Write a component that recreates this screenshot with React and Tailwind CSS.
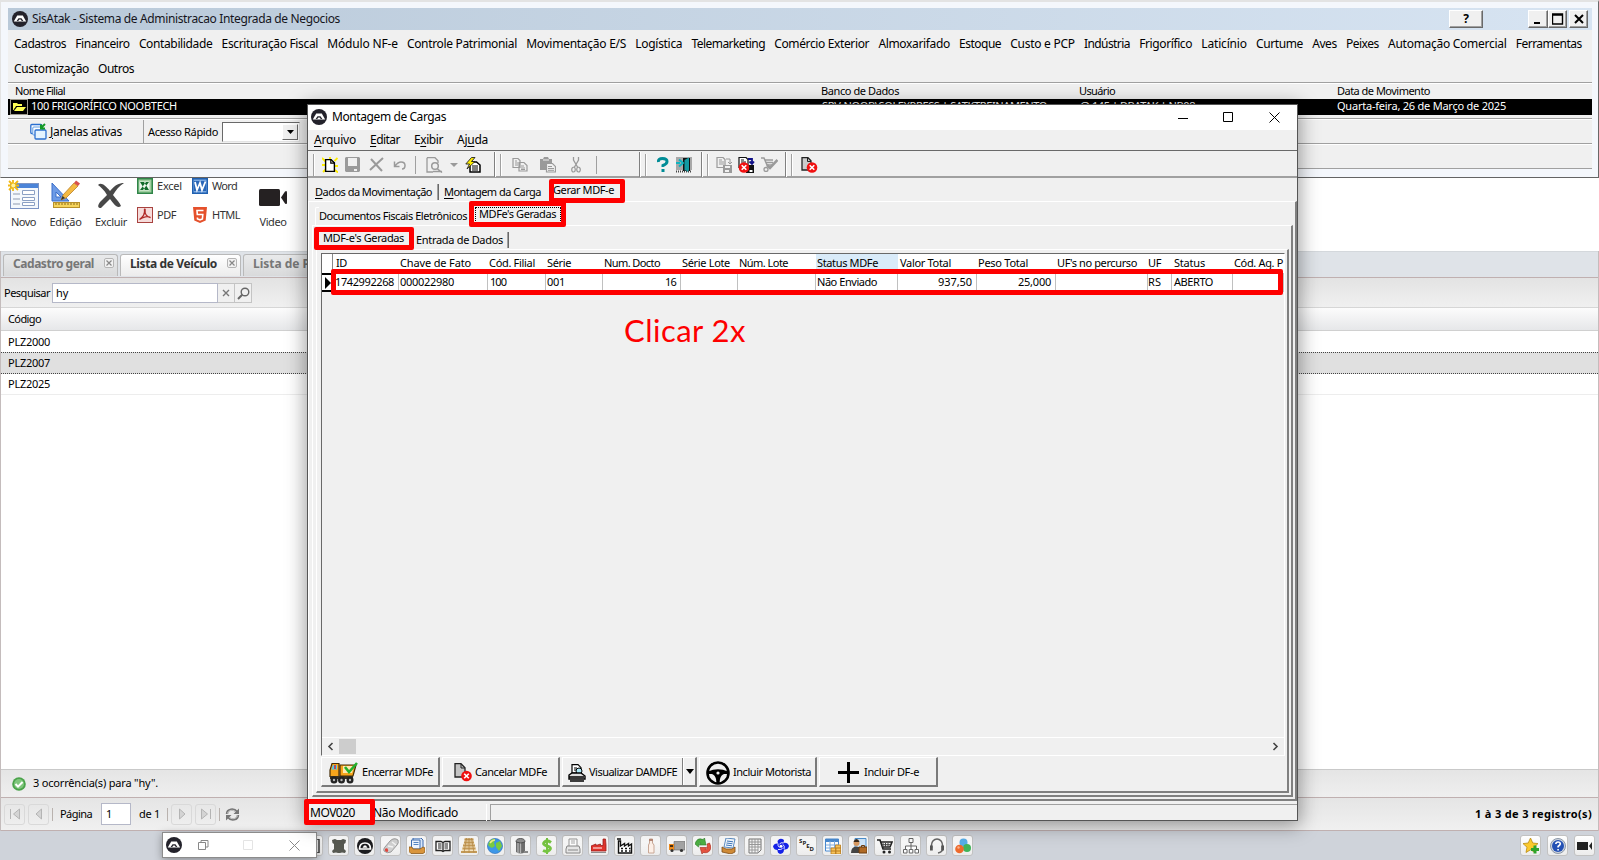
import React, { useLayoutEffect, useRef } from "react";

/* Text run whose tracking is adjusted so that it fills exactly `w` pixels. */
function Fit({ w, className = "", children }) {
  const inner = useRef(null);
  useLayoutEffect(() => {
    const el = inner.current;
    el.style.letterSpacing = "0px";
    const natural = el.getBoundingClientRect().width;
    const n = Math.max(1, el.textContent.length);
    el.style.letterSpacing = (w - natural) / n + "px";
  }, [w]);
  return (
    <span className={"block flex-none whitespace-nowrap " + className} style={{ width: w }}>
      <span ref={inner}>{children}</span>
    </span>
  );
}

const U = ({ children }) => <span className="underline underline-offset-2">{children}</span>;

function Svg({ w = 16, h = 16, vb, className = "", children }) {
  return (
    <svg width={w} height={h} viewBox={vb || `0 0 ${w} ${h}`} className={"block flex-none " + className} fill="none">
      {children}
    </svg>
  );
}

function Logo({ className = "" }) {
  return (
    <Svg className={className}>
      <circle cx="8" cy="8" r="8" fill="#23222b" />
      <path d="M1.800 10.500 L5.200 4.500 H10.800 L14.200 10.500 Z" fill="#fff" />
      <path d="M4.600 10 L6.500 7.200 H9.500 L11.400 10 Z" fill="#23222b" />
      <path d="M6.200 10 L7.400 8.600 H8.600 L9.800 10 Z" fill="#fff" />
    </Svg>
  );
}

/* ---------- main window header ---------- */

const MENU = [
  ["Cadastros", 52], ["Financeiro", 54.5], ["Contabilidade", 73.5], ["Escrituração Fiscal", 96.5], ["Módulo NF-e", 70.5],
  ["Controle Patrimonial", 110], ["Movimentação E/S", 100], ["Logística", 47], ["Telemarketing", 73.5],
  ["Comércio Exterior", 95], ["Almoxarifado", 71.5], ["Estoque", 42], ["Custo e PCP", 64.5], ["Indústria", 46],
  ["Frigorífico", 53], ["Laticínio", 45.5], ["Curtume", 47], ["Aves", 24.5], ["Peixes", 33], ["Automação Comercial", 118.5],
  ["Ferramentas", 66],
];

function ClassicButton({ className, children }) {
  return (
    <div className={"flex h-[18px] flex-none items-center justify-center border border-b-[#696969] border-l-white border-r-[#696969] border-t-white bg-[#f0f0f0] shadow-[inset_-1px_-1px_0_#a0a0a0] " + className}>
      {children}
    </div>
  );
}

function MainHeader() {
  return (
    <header className="h-[178px] border-b border-l border-r border-t-2 border-b-[#646464] border-l-[#e3e3e3] border-r-[#696969] border-t-[#e3e3e3] bg-[#f4f7fc] pl-[7px] pr-[6px] pt-[6px] text-black">
      <div className="flex h-[22px] items-center bg-gradient-to-r from-[#b9c9d9] to-[#d7e4f2] pl-[4px] pr-[4px]">
        <Logo />
        <Fit w={308} className="ml-1 text-[12px] text-[#15151c]">SisAtak - Sistema de Administracao Integrada de Negocios</Fit>
        <ClassicButton className="ml-auto w-[34px] text-[12px] font-bold">?</ClassicButton>
        <ClassicButton className="ml-[45px] w-[20px]"><Svg w={12} h={12}><path d="M2 10h6" stroke="#000" strokeWidth="2" /></Svg></ClassicButton>
        <ClassicButton className="w-[19px]"><Svg w={12} h={12}><path d="M.5 1h10v10H.5z M.5 2h10" stroke="#000" strokeWidth="1.4" /></Svg></ClassicButton>
        <ClassicButton className="ml-[2px] w-[19px]"><Svg w={12} h={12}><path d="M2 2l8 8M10 2l-8 8" stroke="#000" strokeWidth="2" /></Svg></ClassicButton>
      </div>
      <nav className="h-[53px] border-b border-[#a0a0a0] bg-[#f0f0f0] pl-[6px] pt-px text-[12px]">
        <div className="flex h-[25px] items-center gap-[9.2px]">
          {MENU.map(([t, w]) => <Fit key={t} w={w}>{t}</Fit>)}
        </div>
        <div className="flex h-[25px] items-center gap-[9px]">
          <Fit w={75}>Customização</Fit>
          <Fit w={36}>Outros</Fit>
        </div>
      </nav>
      <div className="flex h-[16px] items-center border-t border-white bg-[#f0f0f0] pl-[7px] text-[11px]">
        <Fit w={50}>Nome Filial</Fit>
        <Fit w={78} className="ml-[756px]">Banco de Dados</Fit>
        <Fit w={36} className="ml-[180px]">Usuário</Fit>
        <Fit w={93} className="ml-[222px]">Data de Movimento</Fit>
      </div>
      <div className="flex h-[16px] items-center bg-black pl-[2px] text-[11px] text-white">
        <div className="flex h-[16px] w-[18px] items-center justify-center border border-[#a09c90]">
          <Svg w={14} h={11}>
            <path d="M1 8V1h4l1 1h4v2H4L2 8z" fill="#ffff54" /><path d="M2 9l3-4h9l-3 4z" fill="#ffff54" /><path d="M3.500 5.500L2 8" stroke="#222" />
          </Svg>
        </div>
        <Fit w={146} className="ml-[3px] mt-[-2px]">100 FRIGORÍFICO NOOBTECH</Fit>
        <Fit w={225} className="ml-[645px] mt-[-2px]">{"SRV-NOOB\\SQLEXPRESS | SATKTREINAMENTO"}</Fit>
        <Fit w={115} className="ml-[33px] mt-[-2px]">@ 145 | DBATAK | NB08</Fit>
        <Fit w={169} className="ml-[142px] mt-[-2px]">Quarta-feira, 26 de Março de 2025</Fit>
      </div>
      <div className="h-[4px] border-b border-[#a0a0a0] bg-[#f0f0f0]" />
      <div className="flex h-[25px] items-center border-b border-[#a0a0a0] border-t border-t-white bg-[#f0f0f0]">
        <div className="flex h-full w-[136px] items-center border-r border-[#a0a0a0] pl-[22px]">
          <Svg w={17} h={17}>
            <rect x=".8" y="1.500" width="11" height="9" rx="1" fill="#fff" stroke="#2a6fd0" strokeWidth="1.3" />
            <rect x="2.800" y="4" width="10" height="8" rx="1" fill="#fff" stroke="#5b9ae4" />
            <rect x="5" y="7" width="11" height="9" rx="1" fill="#e4f3ff" stroke="#2a6fd0" strokeWidth="1.3" />
            <path d="M15 1l-4 4M11 1.500v4h4" stroke="#159a25" strokeWidth="2" />
          </Svg>
          <Fit w={72} className="ml-[3px] text-[12px]"><U>J</U>anelas ativas</Fit>
        </div>
        <Fit w={70} className="ml-[4px] mt-px text-[11px]">Acesso Rápido</Fit>
        <div className="ml-[4px] flex h-[20px] w-[78px] justify-end border border-b-[#e3e3e3] border-l-[#696969] border-r-[#e3e3e3] border-t-[#696969] bg-white p-px">
          <div className="flex w-[16px] items-center justify-center border border-b-[#696969] border-l-white border-r-[#696969] border-t-white bg-[#f0f0f0]">
            <Svg w={7} h={4}><path d="M0 0h7L3.500 4z" fill="#000" /></Svg>
          </div>
        </div>
      </div>
      <div className="h-[25px] border-b border-t border-b-[#a0a0a0] border-t-white bg-[#f0f0f0]" />
    </header>
  );
}

/* ---------- page toolbar ---------- */

function BigTool({ icon, w, cell, label }) {
  return (
    <div className="flex flex-none flex-col items-center" style={{ width: cell }}>
      <div className="flex h-[34px] items-center">{icon}</div>
      <Fit w={w} className="mt-[3px] text-[11px] leading-[14px]">{label}</Fit>
    </div>
  );
}

function PageToolbar() {
  return (
    <div className="flex h-[73px] bg-white pl-[5px] text-[#333]">
      <div className="flex w-[127px]">
        <BigTool cell={37} w={25} label="Novo" icon={
          <Svg w={31} h={30}>
            <rect x="2.500" y="3.500" width="28" height="25" fill="#f4f8fc" stroke="#7c94c4" />
            <rect x="3" y="4" width="27" height="4" fill="#4b84d8" />
            <path d="M5 14h7M5 19h7M5 24h7" stroke="#8f9bb0" />
            <path d="M14.500 10.500h12v4h-12zM14.500 17.500h12v3h-12zM14.500 22.500h12v3h-12z" stroke="#8ba0c4" fill="#fff" />
            <path d="M5 0v11M0 5.500h11M1 1l9 9M10 1L1 10" stroke="#f3b913" strokeWidth="1.800" /><circle cx="5.300" cy="5.500" r="2" fill="#fff3a0" />
          </Svg>} />
        <BigTool cell={47} w={32} label="Edição" icon={
          <Svg w={31} h={30}>
            <path d="M2 3v18h17z M6 12v5h5z" fill="#6d9be6" stroke="#3b6fca" fillRule="evenodd" />
            <path d="M11 20l2-5L24 3l4 3-12 12z" fill="#f4b941" stroke="#b98028" strokeWidth=".8" />
            <path d="M24 3l2-2.500 4 3L28 6z" fill="#d8504c" /><path d="M11 20l1.600-4 2.400 2z" fill="#333" />
            <rect x="3.500" y="22.500" width="26" height="5" fill="#f6d45c" stroke="#b8902a" />
            <path d="M6 23v2M9 23v2M12 23v2M15 23v2M18 23v2M21 23v2M24 23v2M27 23v2" stroke="#8a6a1a" />
          </Svg>} />
        <BigTool cell={44} w={32} label="Excluir" icon={
          <Svg w={28} h={28}>
            <path d="M1 4C4 1 8 4 13 10 18 4 22 2 27 2 22 5 19 9 16 14 20 19 23 22 24 25 20 28 17 23 13 18 10 21 7 24 4 27 1 27 0 25 3 21L10 14C7 9 4 6 1 4z" fill="#484848" />
          </Svg>} />
      </div>
      <div className="grid h-[58px] grid-cols-[55px_66px] grid-rows-[29px_29px] pl-[5px] text-[11px] leading-[14px]">
        <div className="flex items-start gap-1">
          <Svg><rect width="16" height="16" fill="#2f8548" /><path d="M1.500 1.500h13v13h-13z" fill="#9fce9f" /><path d="M2.500 3.500h10v9h-10z" fill="#eef8ee" /><path d="M3 4h4l5 8H8zM12 4H9l-6 8h3z" fill="#126c2b" /></Svg>
          <Fit w={25} className="mt-[1px]">Excel</Fit>
        </div>
        <div className="flex items-start gap-1">
          <Svg><rect width="16" height="16" fill="#2060b0" /><path d="M1.500 1.500h13v13h-13z" fill="#79a8e2" /><path d="M2 3h12v10H2z" fill="#2a67b8" /><path d="M3 4l2 8L8 5l2 7L13.500 3.500" stroke="#fff" strokeWidth="1.800" /></Svg>
          <Fit w={25} className="mt-[1px]">Word</Fit>
        </div>
        <div className="flex items-start gap-1">
          <Svg><rect x=".5" y=".5" width="15" height="15" fill="#f6dcdb" stroke="#a8423f" /><path d="M2.500 12.500C6 10 8 6 7.500 3c-.3-1.500 1-1 .6.500C7.500 7 10 10 13.500 10.500 11 9 6 9.500 2.500 12.500z" stroke="#b02a28" strokeWidth="1.300" /></Svg>
          <Fit w={19} className="mt-[1px]">PDF</Fit>
        </div>
        <div className="flex items-start gap-1">
          <Svg><path d="M1 0h14l-1.300 13.500L8 16l-5.700-2.500z" fill="#e5502b" /><path d="M11.500 3.500H5l.3 4h5.500l-.4 4.500-2.400.8-2.500-.8-.1-1.500" stroke="#fff" strokeWidth="1.600" /></Svg>
          <Fit w={28} className="mt-[1px]">HTML</Fit>
        </div>
      </div>
      <div className="ml-[-1px]">
        <BigTool cell={32} w={27} label="Video" icon={
          <Svg w={28} h={17} className="mt-[4px]"><rect width="21" height="17" rx="1.500" fill="#252122" /><path d="M22 8.500l4-6q2-1.500 2 1v10q0 2.500-2 1z" fill="#252122" /></Svg>} />
      </div>
    </div>
  );
}

/* ---------- list area ---------- */

function PageTab({ label, w, width, active }) {
  return (
    <div className={"flex h-[22px] flex-none items-center rounded-t-[3px] border border-b-0 border-[#b9b9b9] pb-[3px] pl-[9px] text-[12px] font-bold " + (active ? "bg-gradient-to-b from-white to-[#ececec] text-[#333]" : "bg-gradient-to-b from-[#e9eaeb] to-[#d9dadb] text-[#777]")} style={{ width }}>
      <Fit w={w}>{label}</Fit>
      <div className="mb-[3px] ml-auto mr-[3px] flex h-[10px] w-[10px] items-center justify-center rounded-[2px] border border-[#b5b5b5] bg-[#f2f2f2]">
        <Svg w={6} h={6}><path d="M.5.5l5 5M5.500.5l-5 5" stroke="#888" strokeWidth="1.200" /></Svg>
      </div>
    </div>
  );
}

function PagerButton({ d }) {
  return (
    <div className="flex h-[21px] w-[21px] flex-none items-center justify-center rounded-[3px] border border-[#d9d9d9]">
      <Svg w={12} h={12}><path d={d} fill="#d4d4d4" stroke="#b4b4b4" /></Svg>
    </div>
  );
}

const Sep = ({ className }) => <div className={"h-[13px] w-px flex-none bg-[#b9b2ae] " + className} />;

function ListArea() {
  return (
    <main className="flex h-[580px] flex-col border-l border-r border-[#c4bcbc] text-[11px] text-black">
      <div className="flex h-[27px] items-start gap-[2px] border-b border-t border-b-[#c0b0b0] border-t-[#d4d8dc] bg-[#dfe3e8] pl-[2px] pt-[2px]">
        <PageTab label="Cadastro geral" w={81} width={115} />
        <PageTab label="Lista de Veículo" w={87} width={121} active />
        <PageTab label="Lista de P" w={57} width={130} />
      </div>
      <div className="flex h-[29px] items-center bg-gradient-to-b from-[#e3e3e3] to-[#f0f0f0] pl-[3px]">
        <Fit w={46} className="mt-px">Pesquisar</Fit>
        <div className="ml-[2px] mt-px flex h-[20px] w-[166px] items-center border border-[#b5b8c8] bg-white pl-[3px] text-[11px]">hy</div>
        <div className="mt-px flex h-[20px] w-[17px] items-center justify-center border border-l-0 border-[#c4c4c4] bg-[#f0f0f0]">
          <Svg w={8} h={8}><path d="M1 1l6 6M7 1L1 7" stroke="#777" strokeWidth="1.400" /></Svg>
        </div>
        <div className="mt-px flex h-[20px] w-[17px] items-center justify-center border border-l-0 border-[#c4c4c4] bg-[#f0f0f0]">
          <Svg w={13} h={13}><circle cx="8" cy="5" r="3.800" stroke="#666" strokeWidth="1.400" /><path d="M5.200 7.800L1 12" stroke="#666" strokeWidth="2" /></Svg>
        </div>
      </div>
      <div className="flex h-[24px] items-center border-b border-t border-b-[#d0d0d0] border-t-[#d6d6d6] bg-gradient-to-b from-[#fcfcfc] to-[#e6e7e9] pl-[7px]"><Fit w={33}>Código</Fit></div>
      <div className="flex h-[21px] items-center pl-[7px] pt-px"><Fit w={42}>PLZ2000</Fit></div>
      <div className="flex h-[22px] items-center border-b border-t border-dotted border-[#444] bg-[#e0e0e0] pl-[7px]"><Fit w={42}>PLZ2007</Fit></div>
      <div className="flex h-[21px] items-center border-b border-[#ededed] pl-[7px]"><Fit w={42}>PLZ2025</Fit></div>
      <div className="flex-1" />
      <div className="flex h-[28px] items-center border-t border-[#c9c9c9] bg-gradient-to-b from-[#e5e5e5] to-[#efefef] pl-[11px]">
        <Svg w={14} h={14}><circle cx="7" cy="7" r="6.800" fill="#4aa34a" /><circle cx="7" cy="7" r="5" fill="#7fc67c" /><path d="M3.500 7l2.500 2.600L10.600 5" stroke="#fff" strokeWidth="2" /></Svg>
        <Fit w={125} className="ml-[7px]">3 ocorrência(s) para "hy".</Fit>
      </div>
      <div className="flex h-[34px] items-center border-b border-t border-[#c0b0b0] bg-gradient-to-b from-[#e5e5e5] to-[#f0f0f0] pl-[3px] pr-[6px]">
        <PagerButton d="M1.500 1v10M10.500 1v10L4.500 6z" />
        <div className="w-[3px]" />
        <PagerButton d="M8.500 1v10L3 6z" />
        <Sep className="ml-[3px]" />
        <Fit w={32} className="ml-[7px]">Página</Fit>
        <div className="ml-[9px] flex h-[22px] w-[30px] items-center border border-[#b5b8c8] bg-white pl-[4px]">1</div>
        <Fit w={21} className="ml-[8px]">de 1</Fit>
        <Sep className="ml-[7px]" />
        <div className="w-[3px]" />
        <PagerButton d="M3.500 1v10L9 6z" />
        <div className="w-[3px]" />
        <PagerButton d="M10.500 1v10M1.500 1v10l6-5z" />
        <Sep className="ml-[3px]" />
        <Svg w={15} h={15} className="ml-[5px]">
          <path d="M2 7C2 2 9 1 12 5M13 8C13 13 6 14 3 10" stroke="#777" strokeWidth="2.400" /><path d="M2.600 6.500C3 3 9 2 11.500 5.500M12.400 8.500C12 12 6 13 3.500 9.500" stroke="#ddd" strokeWidth=".8" />
          <path d="M14 1.500v5.500H8.500zM1 13.500V8h5.500z" fill="#777" />
        </Svg>
        <Fit w={117} className="ml-auto font-bold">1 à 3 de 3 registro(s)</Fit>
      </div>
    </main>
  );
}

/* ---------- bottom icon bar ---------- */

const SHORTCUTS = [
  <path key="a" d="M1 2l3-1 2 1h4l2-1 3 1-.5 3-1.500 1v5l2 2-1 2-3-.5-2 .5H7L5 14.500 2 15l-1-2 2-2V6L1.500 5z" fill="#565850" />,
  <g key="b"><circle cx="8" cy="8" r="8" fill="#1c1c1f" /><path d="M2.500 11q0-6 5.500-6t5.500 6z" fill="none" stroke="#fff" strokeWidth="1.700" /><path d="M5.500 9.800L7 7.500h2l1.500 2.300z" fill="#fff" /></g>,
  <g key="c"><path d="M7 3q4-4 8-1 1 3-1 5l-6 7q-4 2-7-1-1-2 1-4z" fill="#d0d0d0" stroke="#8a8a8a" strokeWidth=".8" /><path d="M9 4l4 3M5 8l5 1" stroke="#f4f4f4" strokeWidth="1.500" /><path d="M2 11q1-1 2.500-.5 1.500 2 0 3.500-3 0-2.500-3z" fill="#e0453c" /></g>,
  <g key="d"><path d="M4 0h8l2 2v9H4z" fill="#dbe9fb" stroke="#3e6fb4" /><path d="M2.500 2H11v9H2.500z" fill="#eef5ff" stroke="#3e6fb4" /><path d="M4.500 4.500h5M4.500 6.500h5" stroke="#5486c4" /><path d="M0 9h3l1 2h7l3-2 2 1v4l-2 1.500H2l-2-2z" fill="#d9953c" stroke="#8d5a1c" strokeWidth=".8" /></g>,
  <g key="e"><path d="M1 3.500h5l2 1 2-1h5v9h-5l-2 1-2-1H1zM8 4.500v9" stroke="#222" strokeWidth="1.300" fill="#fff" /><path d="M3 6h3.500M3 8h3.500M3 10h3.500M9.500 6H13M9.500 8H13M9.500 10H13" stroke="#222" strokeWidth="1.200" /></g>,
  <g key="f"><path d="M4 0h8l4 15H0z" fill="#f4e3bf" /><path d="M3.500 1.500h9M3 4.500h10M2 7.500h12M1.500 10.500h13M0 14h16" stroke="#c39a58" strokeWidth="2" /><path d="M5.500 0L3 15M8 0v15M10.500 0L13 15" stroke="#b98c48" strokeWidth=".8" /></g>,
  <g key="g"><circle cx="8" cy="8" r="7.600" fill="#3d97e8" stroke="#2c6cb4" strokeWidth=".6" /><path d="M2 4q3-4 6-3L7 5l1 3-3 2-2-1-2-2zM9 5l4-2 2 5-3 5-3-4z" fill="#7acc42" /><path d="M3 5q2-3 5-3" stroke="#f4f08a" strokeWidth="1.500" /></g>,
  <g key="h"><path d="M3 4v10q5 3 9 0V4z" fill="#6c6c6c" /><path d="M5 5v10M7.500 5v10" stroke="#b5b5b5" strokeWidth="1.300" /><path d="M3 4q0-3.500 4.500-3.500T12 4q-4 2-9 0z" fill="#909090" stroke="#444" strokeWidth=".8" /><path d="M11 13h4v2h-4z" fill="#888" /></g>,
  <g key="i"><path d="M12 4.500Q8 1.500 5.500 4t2.500 4 2.500 4-6.500.5" stroke="#76c442" strokeWidth="3" fill="none" /><path d="M8 0v16" stroke="#76c442" strokeWidth="2" /></g>,
  <g key="j"><path d="M4 1h8v8H4z" fill="#fff" stroke="#999" /><path d="M6 3h4M6 5h4" stroke="#aaa" /><path d="M2 8h12l1 3v4H1v-4z" fill="#e6e6e6" stroke="#888" /><path d="M3 12h10" stroke="#888" /></g>,
  <g key="k"><path d="M0 8l5-2v1.500L9.500 6v1.500H12V1h2.500l.5 6v6H0z" fill="#e0352c" stroke="#a0201c" strokeWidth=".8" /><path d="M2 10h9" stroke="#f7b8b4" strokeWidth="1.500" /><path d="M0 14.500h15" stroke="#8e8e8e" /></g>,
  <g key="l"><path d="M1.500 15V3h2v5l4-2.500V8l4-2.500V8l3-2v9z" fill="#fff" stroke="#111" strokeWidth="1.400" /><path d="M4 10.500h2M8 10.500h2M12 10.500h1.500M4 13h2M8 13h2M12 13h1.500M0 1h4" stroke="#111" strokeWidth="1.400" /></g>,
  <g key="m"><path d="M6.500 1h3v4l1.500 2v8H5.500V7l1-2z" fill="#fdf0e8" stroke="#c9a896" /><path d="M6 1h4v2H6z" fill="#b98a78" /></g>,
  <g key="n"><path d="M5 3.500h11v8.500H5z" fill="#a4a4a4" stroke="#666" strokeWidth=".6" /><path d="M0 6h5v6H0z" fill="#ee8a1d" /><path d="M1 7h3v2H1z" fill="#473015" /><circle cx="3" cy="12.500" r="1.600" fill="#333" /><circle cx="12.500" cy="12.500" r="1.600" fill="#333" /></g>,
  <g key="o"><path d="M0 6Q2-1 8 1.500L9.500 0 11 7H4.500L6 5Q4 4.500 3.500 9z" fill="#4db043" stroke="#2c7a28" strokeWidth=".6" /><path d="M16 9q-1 7-8 5.500L7 16 5 9.500h6.500L10 11.500q3 0 2-5.500l2.500-1z" fill="#e4523f" stroke="#a32a1c" strokeWidth=".6" /></g>,
  <g key="p"><path d="M5 0l9 1-2 9-9-1z" fill="#f5faff" stroke="#5c8dc4" /><path d="M6 3l6 .8M5.500 5l6 .8M5 7l6 .8" stroke="#3e76bb" /><path d="M1 9l4 2h6l3-2v5l-4 2-9-2z" fill="#cf8a36" stroke="#7d4d18" strokeWidth=".8" /></g>,
  <g key="q"><path d="M2 1h12v11l-3 3H2z" fill="#f6f6f6" stroke="#777" /><path d="M2 4h12M2 6.500h12M2 9h12M2 12h9M5 1v14M8 1v14M11 1v14" stroke="#999" /></g>,
  <g key="r"><path d="M4.500 3Q7-1 11 2l-.5 3q4-1 5.500 3-1 4-5 3.500 0 4-4 4.500-3-1-2.500-4Q1 12 0 8.500 1 5 5 5.500z" fill="#1622e8" /><path d="M10.500 5Q8 4 6.500 6M11 11q1-3-1-4.500M5 11.500q3 .5 4.500-1M5 5.500Q4.500 8 6.500 9.500" stroke="#fff" strokeWidth=".9" /><circle cx="8" cy="8.200" r="1.500" fill="#fff" /></g>,
  null,
  <g key="t"><path d="M.5 1h13v12H.5z" fill="#fff" stroke="#4a8ad0" /><path d="M.5 2.500h13" stroke="#4a8ad0" strokeWidth="3" /><path d="M1 7h13M1 10h13M5 3v9M9.500 3v9" stroke="#7eace0" /><path d="M6 10h5v6H6zM10.500 7h5v9h-5z" fill="#f7c35c" stroke="#b97c1c" strokeWidth=".8" /><path d="M6 13h10M11 10h5" stroke="#b97c1c" /></g>,
  <g key="u"><path d="M4 .5h11v9H4z" fill="#cfe6fa" stroke="#4c91d0" /><circle cx="5.500" cy="5" r="3" fill="#d99a62" /><path d="M2.500 4q1-3 3-3t3 3z" fill="#3c2a1a" /><path d="M0 15q0-6.500 5.500-6.500T11 15z" fill="#444" /><path d="M8 9h8v6H8z" fill="#b06a25" stroke="#6b3c10" /><path d="M10.500 9V7.500h3V9" stroke="#6b3c10" /></g>,
  <g key="v"><path d="M0 2h3l3 9h8M4 4h11l-2 5H5" stroke="#222" strokeWidth="1.600" fill="none" /><path d="M6 5v4M8.500 5v4M11 5v4M5 6.700h9" stroke="#444" /><circle cx="7" cy="14" r="1.500" fill="#222" /><circle cx="12.500" cy="14" r="1.500" fill="#222" /></g>,
  <g key="w" stroke="#666" fill="#fff"><path d="M6 .5h4v4H6zM8 5v3M2.500 11V8h11v3M8 8v3" /><path d="M.5 11.500h3.500v3.500H.5zM6.300 11.500h3.500v3.500H6.300zM12 11.500h3.500v3.500H12z" /></g>,
  <g key="x"><path d="M2.500 10V7a5.500 6 0 0111 0v4q0 3-4.500 4" stroke="#666" strokeWidth="1.500" fill="none" /><path d="M1 7.500h2.800v5H1zM12.200 7.500H15v5h-2.800z" fill="#555" /></g>,
  <g key="y"><circle cx="8.500" cy="4.500" r="4" fill="#57aee8" /><circle cx="12" cy="10" r="4" fill="#42b45a" /><circle cx="4.500" cy="11" r="4.300" fill="#ee6a2c" /><circle cx="3.500" cy="9.500" r="1.200" fill="#f9b08a" /></g>,
];

function BarButton({ children }) {
  return (
    <div className="flex h-[21px] w-[21px] flex-none items-center justify-center rounded-[3px] border border-[#c2c2c2] bg-gradient-to-b from-white to-[#ececec]">
      {children}
    </div>
  );
}

function IconBar() {
  return (
    <footer className="flex h-[29px] items-center bg-[#cfd3da] pl-[302px] pr-[4px]">
      <BarButton><Svg w={14} h={14}><path d="M1 0h12v14H1z" stroke="#333" strokeWidth="1.400" /></Svg></BarButton>
      <div className="ml-[5px] flex gap-[5px]">
        {SHORTCUTS.map((g, i) => (
          <BarButton key={i}>
            {g ? <Svg>{g}</Svg> : (
              <div className="flex text-[6px] font-bold leading-[7px] text-[#222]">
                <span>S</span><span className="mt-[2px]">P</span><span className="mt-[5px]">E</span><span className="mt-[8px]">D</span>
              </div>
            )}
          </BarButton>
        ))}
      </div>
      <div className="ml-auto flex gap-[6px]">
        <BarButton><Svg><path d="M7.500 0l2.300 5 5.200.6-4 3.600 1.200 5.300-4.700-2.700L3 14.500l1-5.300L0 5.600 5.200 5z" fill="#fbc92c" stroke="#b98b13" strokeWidth=".8" /><path d="M8 11.500h8M12 7.500v8" stroke="#2fa32b" strokeWidth="3" /></Svg></BarButton>
        <BarButton><Svg><circle cx="8" cy="8" r="7.500" fill="#cfd6e0" stroke="#8b97a8" /><circle cx="8" cy="8" r="6" fill="#2451b4" /><path d="M5.800 6q.2-2 2.300-2t2.200 1.900Q10.200 7 8.100 8.500v1M8.100 11v1.600" stroke="#fff" strokeWidth="1.600" /></Svg></BarButton>
        <BarButton><Svg><rect x="0" y="4" width="11" height="8" fill="#222" /><path d="M12 8l3-4v8z" fill="#222" /></Svg></BarButton>
      </div>
    </footer>
  );
}

function MiniWindow() {
  return (
    <div className="absolute left-[162px] top-[832px] flex h-[26px] w-[155px] items-center border border-[#8c8c8c] bg-white pl-[3px] shadow-[0_2px_8px_rgba(0,0,0,0.35)]">
      <Logo />
      <Svg w={11} h={10} className="ml-[16px]"><path d="M.5 2.500h7v7h-7zM3 2.500V.5h7v6.500H8" stroke="#888" /></Svg>
      <Svg w={11} h={11} className="ml-[34px]"><path d="M.5.5h9v9h-9z" stroke="#e4e4e4" /></Svg>
      <Svg w={11} h={11} className="ml-[35px]"><path d="M.5.5l10 10M10.500.5l-10 10" stroke="#888" /></Svg>
    </div>
  );
}

/* ---------- dialog ---------- */

const GRID = [
  { h: "ID", hw: 11, w: 66, pad: 2, v: "1742992268", vw: 59 },
  { h: "Chave de Fato", hw: 71, w: 89, pad: 1, v: "000022980", vw: 54 },
  { h: "Cód. Filial", hw: 46, w: 58, pad: 2, v: "100", vw: 16 },
  { h: "Série", hw: 24, w: 57, pad: 1, v: "001", vw: 18 },
  { h: "Num. Docto", hw: 56, w: 78, pad: 1, v: "16", vw: 11, right: true },
  { h: "Série Lote", hw: 48, w: 57, pad: 1 },
  { h: "Núm. Lote", hw: 49, w: 78, pad: 1 },
  { h: "Status MDFe", hw: 61, w: 82, pad: 1, v: "Não Enviado", vw: 60, hot: true },
  { h: "Valor Total", hw: 51, w: 79, pad: 2, v: "937,50", vw: 34, right: true },
  { h: "Peso Total", hw: 50, w: 79, pad: 2, v: "25,000", vw: 33, right: true },
  { h: "UF's no percurso", hw: 80, w: 92, pad: 1 },
  { h: "UF", hw: 13, w: 24, pad: 0, v: "RS", vw: 13 },
  { h: "Status", hw: 31, w: 61, pad: 2, v: "ABERTO", vw: 39 },
  { h: "Cód. Ag. P", hw: 49, w: 51, pad: 2 },
];

/* Left offset of each column caption, measured from the column's edge. */
const HEAD_PAD = [3, 1, 1, 1, 1, 1, 1, 1, 2, 1, 1, 0, 2, 1];

const Handle = ({ className = "" }) => <div className={"h-[22px] w-[2px] flex-none border-l border-r border-l-[#a0a0a0] border-r-white " + className} />;
const GroupEnd = ({ className = "" }) => <div className={"h-[25px] w-[2px] flex-none border-l border-r border-l-[#808080] border-r-white " + className} />;
const G = "#9a9a9a";

function RedCross({ x, y }) {
  return (
    <g>
      <circle cx={x} cy={y} r="5.300" fill="#f01010" />
      <path d={`M${x - 2.3} ${y - 2.3}l4.600 4.600M${x + 2.3} ${y - 2.3}l-4.600 4.600`} stroke="#fff" strokeWidth="1.600" />
    </g>
  );
}

function DialogToolbar() {
  return (
    <div className="flex h-[28px] items-center border-b-2 border-t border-b-[#a0a0a0] border-t-[#696969] pl-[5px] pt-[2px]">
      <Handle />
      <Svg className="ml-[7px]">
        <path d="M0 1l4 4M8 0v3M15.500 1l-3 3M0 8h4M13 9h3M1 15l4-4M16 15.500l-3-2.500" stroke="#ffee00" strokeWidth="1.800" />
        <path d="M3.600 2.600h5.500l3.300 3.300v8.500H3.600z" fill="#fff" stroke="#000" strokeWidth="1.400" /><path d="M8.800 2.600v3.600h3.600" stroke="#000" strokeWidth="1.200" />
      </Svg>
      <Svg w={15} h={15} className="ml-[7px]"><path d="M1 0h13l1 1v13l-1 1H1l-1-1V1z" fill={G} /><path d="M3 1h9v8H3z" fill="#f0f0f0" /><path d="M9 12h3v2H9z" fill="#f0f0f0" /></Svg>
      <Svg w={15} h={15} className="ml-[9px]"><path d="M2 2l11 12M14 1L1 13" stroke={G} strokeWidth="2" /></Svg>
      <Svg w={14} h={12} className="ml-[9px]"><path d="M1.500 2.500v5h5M2 7Q5 3 8 3q4 0 4 3.500T9 10" stroke={G} strokeWidth="1.500" /></Svg>
      <div className="ml-[8px] h-[18px] w-px bg-[#a0a0a0]" />
      <Svg w={17} h={16} className="ml-[10px]"><path d="M1 .7h8l3 3V6M1 .7v14.300h6" stroke={G} strokeWidth="1.300" /><circle cx="9" cy="9" r="3.300" stroke={G} strokeWidth="1.500" /><path d="M11 11.500l5 4M7 14.500h9" stroke={G} strokeWidth="1.500" /></Svg>
      <Svg w={8} h={4} className="ml-[7px]"><path d="M0 0h8L4 4z" fill={G} /></Svg>
      <Svg className="ml-[7px]"><path d="M5 5h6.500l3.500 3v7H5z" fill="#fff" stroke="#000" strokeWidth="1.500" /><path d="M7 9h6M7 11h6M7 13h6" stroke="#000" /><path d="M6.500.5L.8 7h3.700L2 12l8-7.500H6.500l3.500-4z" fill="#ffee00" stroke="#222" strokeWidth=".9" /></Svg>
      <GroupEnd className="ml-[13px]" />
      <Handle className="ml-[4px]" />
      <Svg className="ml-[10px]"><path d="M1 1.500h5l2 2v7H1zM7 5.500h5l3 3V14H7z" fill="#f0f0f0" stroke={G} strokeWidth="1.200" /><path d="M3 4h2M3 6h3M3 8h3M9 9h3M9 11h4M9 12.500h4" stroke={G} /></Svg>
      <Svg className="ml-[12px]"><path d="M0 2h3l1-2h4l1 2h3v4H6v7H0z" fill={G} /><path d="M3 3h6" stroke="#f0f0f0" /><path d="M6.500 6.500h6l3 3v5.500h-9z" fill="#f0f0f0" stroke={G} strokeWidth="1.200" /><path d="M8 9.500h4M8 11.500h6M8 13.300h6" stroke={G} /></Svg>
      <Svg w={10} h={16} className="ml-[15px]"><path d="M2.500 0v3l4 7M7.500 0v3l-4 7" stroke={G} strokeWidth="1.300" /><path d="M3.500 10Q.7 10 .7 12.500T2.500 15 4.300 12zM6.500 10q2.800 0 2.800 2.500T7.500 15 5.700 12z" stroke={G} strokeWidth="1.200" /></Svg>
      <div className="ml-[15px] h-[18px] w-px bg-[#a0a0a0]" />
      <GroupEnd className="ml-[42px]" />
      <Handle className="ml-[4px]" />
      <Svg w={12} h={15} className="ml-[10px]"><path d="M1.500 5Q1 1.500 5.500 1.500T10 4.500Q10 7 6 8.500V10" stroke="#008c96" strokeWidth="3" /><path d="M4.500 12h3v3h-3z" fill="#008c96" /></Svg>
      <Svg w={16} h={16} className="ml-[7px]"><path d="M0 0h16v13H0z" fill="#a8a8a8" /><path d="M7 1h7v13H7z" fill="#111" /><path d="M8.500 3L13 .5v15L8.500 13z" fill="#129aa2" /><path d="M0 6h4M3 2.500L7 6l-4 3.500" stroke="#0fb4c0" strokeWidth="2" /><path d="M0 14.500h16" stroke="#444" strokeWidth="2" strokeDasharray="1 1" /></Svg>
      <GroupEnd className="ml-[9px]" />
      <Handle className="ml-[4px]" />
      <Svg className="ml-[7px]"><path d="M1 .5h6l2 2v8H1z" fill="#f0f0f0" stroke={G} strokeWidth="1.200" /><path d="M3 3h3M3 5h5M3 7h5M10 2h4v4M12 5l2 2 2-2" stroke={G} /><path d="M7 8h9v8H7z" fill={G} /><path d="M9 9h5v2H9zM9 13h4v2H9z" fill="#f0f0f0" /></Svg>
      <Svg w={17} h={16} className="ml-[6px]"><path d="M1 .5h7l2 2v8H1z" fill="#fff" stroke="#111" strokeWidth="1.200" /><path d="M3 3h3M3 5h5" stroke="#111" /><path d="M10 2h4v4M11.500 4.500L14 7l2-2.500" stroke="#101088" strokeWidth="1.800" /><path d="M8 8h8v8H8z" fill="#111" /><path d="M11.500 13h3v2h-3z" fill="#fff" /><RedCross x={6} y={10.5} /></Svg>
      <Svg w={17} h={15} className="ml-[6px]"><path d="M0 1h3l3 7h5M4 3h8M5 5.500h7" stroke={G} strokeWidth="1.500" /><path d="M6 8l3 3 7.500-8" stroke={G} strokeWidth="2.600" /><circle cx="5" cy="12.500" r="2" stroke={G} strokeWidth="1.300" /></Svg>
      <GroupEnd className="ml-[7px]" />
      <Handle className="ml-[4px]" />
      <Svg w={17} h={16} className="ml-[8px]"><path d="M1 .7h6l3 3V13H1z" fill="#ccc" stroke="#222" strokeWidth="1.300" /><path d="M6.500 1v3.500H10" stroke="#222" /><RedCross x={11} y={10.5} /></Svg>
    </div>
  );
}

function ActionButton({ className, children }) {
  return (
    <div className={"flex h-[30px] flex-none items-center border-b-2 border-l border-r-2 border-t border-b-[#7a7a7a] border-l-white border-r-[#7a7a7a] border-t-white pt-[2px] text-[11px] " + className}>
      {children}
    </div>
  );
}

function DataGrid() {
  return (
    <div className="ml-[4px] mr-[2px] flex h-[503px] flex-col overflow-hidden border border-b-white border-l-[#696969] border-r-white border-t-[#696969] bg-[#f0f0f0]">
      <div className="flex h-[19px] flex-none bg-white">
        <div className="w-[11px] flex-none border-r border-[#888]" />
        {GRID.map((c, i) => (
          <div key={c.h} className={"flex flex-none items-center overflow-hidden " + (c.hot ? "bg-[#d9ebf9]" : "")} style={{ width: c.w, paddingLeft: HEAD_PAD[i] }}>
            <Fit w={c.hw}>{c.h}</Fit>
          </div>
        ))}
      </div>
      <div className="flex h-[19px] flex-none bg-white">
        <div className="flex w-[11px] flex-none items-center border-b-2 border-t-2 border-black pl-[2px]"><Svg w={7} h={12}><path d="M1 0l6 6-6 6z" fill="#000" /></Svg></div>
        {GRID.map((c) => (
          <div key={c.h} className={"flex flex-none items-center border-r border-[#c0c0c0] " + (c.right ? "justify-end pr-[4px]" : "")} style={{ width: c.w, paddingLeft: c.pad }}>
            {c.v && <Fit w={c.vw}>{c.v}</Fit>}
          </div>
        ))}
      </div>
      <div className="flex-1" />
      <div className="flex h-[18px] flex-none items-center border-t border-white pl-[5px] pr-[5px]">
        <Svg w={7} h={9}><path d="M5.500 1L2 4.500 5.500 8" stroke="#444" strokeWidth="1.600" /></Svg>
        <div className="ml-[5px] h-[15px] w-[17px] bg-[#cdcdcd]" />
        <Svg w={7} h={9} className="ml-auto"><path d="M1.500 1L5 4.500 1.500 8" stroke="#444" strokeWidth="1.600" /></Svg>
      </div>
    </div>
  );
}

function ActionBar() {
  return (
    <div className="flex pl-[4px] pt-[1px]">
      <ActionButton className="w-[119px] pl-[7px]">
        <Svg w={29} h={22}>
          <path d="M11 3h16l-3 11H11z" fill="#f7a51c" stroke="#442c05" strokeWidth="1.200" /><path d="M3 1.500h7v13H1V8z" fill="#f7a51c" stroke="#442c05" strokeWidth="1.200" />
          <path d="M4 3h4v4.500H2.500z" fill="#4fc8ee" /><path d="M6 3v4" stroke="#e02020" strokeWidth="1.500" /><path d="M1 14h23v3H1z" fill="#3a3020" />
          <circle cx="5" cy="18" r="3.500" fill="#222" /><circle cx="12.500" cy="18" r="3.500" fill="#222" /><circle cx="21" cy="18" r="3.500" fill="#222" />
          <circle cx="5" cy="18" r="1.200" fill="#bbb" /><circle cx="12.500" cy="18" r="1.200" fill="#bbb" /><circle cx="21" cy="18" r="1.200" fill="#bbb" />
          <path d="M14 4h11l-2 7h-9z" fill="#ffe9b0" /><path d="M16 5l4 5 8-9" stroke="#22b02c" strokeWidth="2.600" />
        </Svg>
        <Fit w={71} className="ml-[4px]">Encerrar MDFe</Fit>
      </ActionButton>
      <ActionButton className="ml-[2px] w-[118px] pl-[11px]">
        <Svg w={19} h={19}><path d="M1 .7h6l4 4V14H1z" fill="#c4c4c4" stroke="#222" strokeWidth="1.300" /><path d="M7 1v4h4" stroke="#222" /><g transform="translate(1.500 2)"><RedCross x={11} y={11} /></g></Svg>
        <Fit w={72} className="ml-[2px]">Cancelar MDFe</Fit>
      </ActionButton>
      <ActionButton className="ml-[2px] w-[135px] pl-[5px]">
        <Svg w={18} h={18}><path d="M4 .7h6l3 3V9H4z" fill="#fff" stroke="#000" strokeWidth="1.200" /><path d="M6 4h3M6 6h5" stroke="#000" /><circle cx="11" cy="7" r="3" fill="#aee9f8" stroke="#000" /><path d="M1 11l3-2h9l4 3v3H1z" fill="#ddd" stroke="#000" strokeWidth="1.400" /><path d="M1 13h15M2 17h14" stroke="#000" strokeWidth="1.600" /></Svg>
        <Fit w={88} className="ml-[3px]">Visualizar DAMDFE</Fit>
        <div className="ml-[5px] mt-[-2px] h-[27px] w-[2px] border-l border-r border-l-[#808080] border-r-white" />
        <Svg w={8} h={5} className="ml-[2px] mt-[-2px]"><path d="M0 0h8L4 5z" fill="#000" /></Svg>
      </ActionButton>
      <ActionButton className="ml-[2px] w-[118px] pl-[6px]">
        <Svg w={24} h={24}><circle cx="12" cy="12" r="10.500" stroke="#000" strokeWidth="2.600" /><path d="M2 10.500Q12 6 22 10.500V13h-4q-3 1-4 5l-.5 4h-3L10 18q-1-4-4-5H2z" fill="#000" /><circle cx="12" cy="12" r="1.600" fill="#f0f0f0" /></Svg>
        <Fit w={78} className="ml-[3px]">Incluir Motorista</Fit>
      </ActionButton>
      <ActionButton className="ml-[2px] w-[119px] pl-[18px]">
        <Svg w={21} h={21}><path d="M0 10.500h21M10.500 0v21" stroke="#000" strokeWidth="3" /></Svg>
        <Fit w={55} className="ml-[5px]">Incluir DF-e</Fit>
      </ActionButton>
    </div>
  );
}

const PAGE = "flex flex-none flex-col border-b-2 border-l border-r-2 border-t border-b-[#808080] border-l-white border-r-[#808080] border-t-white";
const TabSep = ({ className }) => <div className={"h-[16px] w-[2px] flex-none border-l border-r border-l-[#a0a0a0] border-r-[#696969] " + className} />;

function Mark({ className }) {
  return <div className={"absolute rounded-[2px] border-[5px] border-[#fe0000] " + className} />;
}

function Dialog() {
  return (
    <section className="absolute left-[308px] top-[105px] flex h-[715px] w-[989px] flex-col bg-[#f0f0f0] text-[11px] text-black shadow-[0_0_0_1px_#555,0_3px_18px_3px_rgba(0,0,0,0.38)]">
      <div className="flex h-[25px] items-center bg-white pb-px pl-[3px] pr-[17px] text-[12px]">
        <Logo />
        <Fit w={114} className="ml-[5px]">Montagem de Cargas</Fit>
        <Svg w={11} h={11} className="ml-auto"><path d="M0 6.500h10" stroke="#000" /></Svg>
        <Svg w={11} h={11} className="ml-[34px]"><path d="M.5.5h9v9h-9z" stroke="#000" /></Svg>
        <Svg w={11} h={11} className="ml-[35px]"><path d="M.5.5l10 10M10.500.5l-10 10" stroke="#000" /></Svg>
      </div>
      <div className="flex h-[20px] items-center gap-[14px] pl-[6px] text-[12px]">
        <Fit w={42}><U>A</U>rquivo</Fit>
        <Fit w={30}><U>E</U>ditar</Fit>
        <Fit w={29}>E<U>x</U>ibir</Fit>
        <Fit w={31}>Aj<U>u</U>da</Fit>
      </div>
      <DialogToolbar />
      <div className="flex h-[23px] flex-none pl-[7px] pt-[6px] leading-[16px]">
        <Fit w={117}><U>D</U>ados da Movimentação</Fit>
        <TabSep className="ml-[5px]" />
        <Fit w={97} className="ml-[5px]"><U>M</U>ontagem da Carga</Fit>
        <Fit w={61} className="ml-[12px] mt-[-2px]">Gerar MDF-e</Fit>
      </div>
      <div className={PAGE + " h-[600px]"}>
        <div className="flex h-[23px] flex-none pl-[6px] pt-[5px]">
          <div className="h-[19px] w-[4px] flex-none rounded-tl-[2px] border-l border-t border-white" />
          <Fit w={148} className="leading-[18px]">Documentos Fiscais Eletrônicos</Fit>
          <div className="ml-[8px] h-[16px] w-[86px] border border-dotted border-black pl-[3px] leading-[12px]"><Fit w={77}>MDFe's Geradas</Fit></div>
        </div>
        <div className={PAGE + " ml-[3px] mr-[2px] h-[572px]"}>
          <div className="flex h-[23px] flex-none pl-[10px] pt-[4px] leading-[16px]">
            <Fit w={81}>MDF-e's Geradas</Fit>
            <Fit w={87} className="ml-[12px] mt-[2px]">Entrada de Dados</Fit>
            <TabSep className="ml-[4px] mt-[2px]" />
          </div>
          <div className={PAGE + " ml-[3px] mr-[2px] h-[544px] pt-[3px]"}>
            <DataGrid />
            <ActionBar />
          </div>
        </div>
      </div>
      <div className="flex h-[19px] items-center pt-[3px] text-[12px]">
        <Fit w={45} className="ml-[2px] mt-px">MOV020</Fit>
        <Fit w={85} className="ml-[18px] mt-px">Não Modificado</Fit>
        <div className="ml-[28px] h-[17px] w-px bg-white" />
        <div className="ml-[3px] h-[17px] flex-1 border-l border-t border-[#a0a0a0]" />
      </div>

      <Mark className="left-[241px] top-[74px] h-[24px] w-[76px]" />
      <Mark className="left-[161px] top-[96px] h-[26px] w-[97px]" />
      <Mark className="left-[6px] top-[122px] h-[23px] w-[100px]" />
      <Mark className="left-[23px] top-[164px] h-[26px] w-[952px]" />
      <Mark className="left-[-4px] top-[694px] h-[26px] w-[71px]" />
      <div className="absolute left-[316px] top-[205px] font-['Lato',sans-serif] text-[31px] leading-[40px] text-[#fe0000]">
        <Fit w={122}>Clicar 2x</Fit>
      </div>
    </section>
  );
}

export default function App() {
  return (
    <div className="relative h-[860px] w-[1599px] overflow-hidden bg-white font-['Noto_Sans','Open_Sans',sans-serif]">
      <MainHeader />
      <PageToolbar />
      <ListArea />
      <IconBar />
      <MiniWindow />
      <Dialog />
    </div>
  );
}
